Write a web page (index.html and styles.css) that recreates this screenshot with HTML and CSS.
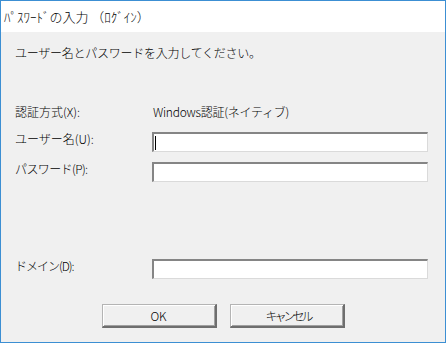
FILE: index.html
```html
<!DOCTYPE html>
<html lang="ja">
<head>
<meta charset="utf-8">
<title>ﾊﾟｽﾜｰﾄﾞの入力</title>
<link rel="stylesheet" href="styles.css">
</head>
<body>
<div class="window">
  <div class="titlebar">ﾊﾟｽﾜｰﾄﾞの入力 （ﾛｸﾞｲﾝ）</div>
  <div class="content">
    <div class="instruction">ユーザー名とパスワードを入力してください。</div>
    <div class="form">
      <div class="label auth">認証方式(X):</div>
      <div class="value auth">Windows認証(ネイティブ)</div>
      <div class="label">ユーザー名(U):</div>
      <div class="field"><span class="caret"></span></div>
      <div class="label pass">パスワード(P):</div>
      <div class="field"></div>
    </div>
    <div class="form domain">
      <div class="label dom">ドメイン(D):</div>
      <div class="field"></div>
    </div>
    <div class="buttons">
      <div class="button">OK</div>
      <div class="button kana">キャンセル</div>
    </div>
  </div>
</div>
</body>
</html>
```
FILE: styles.css
```css
html, body {
  margin: 0;
  padding: 0;
}
body {
  font-family: "Noto Sans CJK JP", "Noto Sans", sans-serif;
  font-size: 12px;
  font-weight: 300;
  color: #000;
  background: #f0f0f0;
}
.window {
  width: 446px;
  height: 343px;
  box-sizing: border-box;
  border: 1px solid #3c8fd3;
  background: #f0f0f0;
  display: flex;
  flex-direction: column;
}
.titlebar {
  height: 31px;
  background: #fff;
  display: flex;
  align-items: center;
  padding-left: 3px;
  font-size: 13px;
  line-height: 14px;
}
.content {
  flex: 1;
  padding: 0 0 0 14px;
}
.instruction {
  margin-top: 14px;
  line-height: 14px;
  letter-spacing: -0.25px;
}
.form {
  display: grid;
  grid-template-columns: 137px 276px;
  grid-auto-rows: 20px;
  row-gap: 10px;
  margin-top: 42px;
}
.label {
  line-height: 14px;
  white-space: nowrap;
}
.label.pass {
  letter-spacing: -0.6px;
}
.label.dom {
  letter-spacing: -1px;
}
.label.auth, .value.auth {
  line-height: 20px;
}
.value.auth {
  padding-left: 1px;
  letter-spacing: -0.25px;
  white-space: nowrap;
}
.field {
  box-sizing: border-box;
  height: 20px;
  background: #fff;
  border-style: solid;
  border-width: 2px 1px 1px 2px;
  border-color: #858585 #dadada #dadada #858585;
  display: flex;
  align-items: center;
  padding-left: 1px;
}
.caret {
  width: 1px;
  height: 14px;
  background: #000;
}
.form.domain {
  margin-top: 77px;
}
.buttons {
  display: flex;
  justify-content: center;
  gap: 13px;
  margin-top: 25px;
  padding-right: 14px;
}
.button {
  box-sizing: border-box;
  width: 115px;
  height: 24px;
  background: #f0f0f0;
  border-style: solid;
  border-width: 1px 2px 2px 1px;
  border-color: #b4b4b4 #6e6e6e #6e6e6e #b4b4b4;
  box-shadow: inset 1px 1px 0 #fff, inset -1px -1px 0 #a0a0a0;
  display: flex;
  align-items: center;
  justify-content: center;
  line-height: 14px;
}
.button.kana {
  letter-spacing: -3px;
  padding-left: 3px;
}
```
